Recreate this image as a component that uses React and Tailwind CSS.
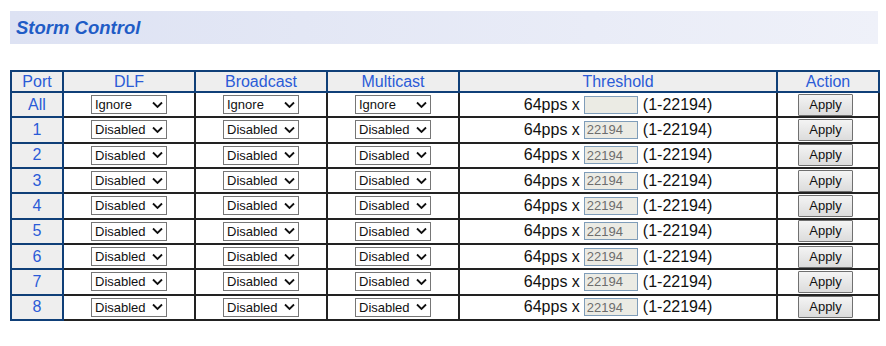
import React from "react";

const ports = ["1", "2", "3", "4", "5", "6", "7", "8"];

function Chevron() {
  return (
    <svg
      className="pointer-events-none absolute right-[4px] top-1/2 -translate-y-1/2"
      width="11"
      height="7"
      viewBox="0 0 11 7"
      fill="none"
    >
      <path d="M1 1l4.5 4.5L10 1" stroke="#111" strokeWidth="1.8" />
    </svg>
  );
}

function Select({ value, options }) {
  return (
    <div className="relative w-[76px] h-[19px]">
      <select
        defaultValue={value}
        className="appearance-none block w-full h-full border border-[#767676] bg-white pl-[3px] py-0 text-[13px] leading-[17px] text-[#111] rounded-none outline-none"
      >
        {options.map((o) => (
          <option key={o}>{o}</option>
        ))}
      </select>
      <Chevron />
    </div>
  );
}

function Threshold({ value }) {
  return (
    <div className="flex items-center justify-center text-[16px] leading-[18px] text-[#111]">
      <span>64pps x</span>
      <input
        disabled
        defaultValue={value}
        className="ml-[4px] w-[54px] h-[18px] border border-[#7f9db9] bg-[#ebebe4] px-[2px] text-[13px] leading-[16px] text-[#6d6d6d] outline-none"
      />
      <span className="ml-[5px]">(1-22194)</span>
    </div>
  );
}

function ApplyButton() {
  return (
    <button className="block w-[55px] h-[22px] border border-[#707070] rounded-[1px] bg-gradient-to-b from-[#f4f4f4] to-[#dcdcdc] text-[13px] leading-[20px] text-[#111]">
      Apply
    </button>
  );
}

const head = "border-2 border-[#0f3f78] bg-[#eeeeee] text-[#2a5bd7] font-normal text-[16px] h-[21px] p-0 leading-[18px]";
const portCell = "border-2 border-[#0f3f78] bg-[#eeeeee] text-[#2a5bd7] text-[16px] leading-[18px] h-[25.33px] p-0 text-center";
const cell = "border-2 border-[#222222] h-[25.33px] p-0 leading-none";

function Row({ port, mode, value }) {
  const opts = port === "All" ? ["Ignore", "Disabled", "Enabled"] : ["Disabled", "Enabled"];
  return (
    <tr>
      <td className={portCell}>{port}</td>
      {[0, 1, 2].map((i) => (
        <td key={i} className={cell}>
          <div className="flex justify-center">
            <Select value={mode} options={opts} />
          </div>
        </td>
      ))}
      <td className={cell}>
        <Threshold value={value} />
      </td>
      <td className={cell}>
        <div className="flex justify-center pr-[5px]">
          <ApplyButton />
        </div>
      </td>
    </tr>
  );
}

export default function App() {
  return (
    <div className="w-[886px] h-[346px] bg-white pt-[11px] pl-[10px] font-['Liberation_Sans',Arial,sans-serif]">
      <div className="w-[868px] h-[33px] bg-gradient-to-r from-[#dde2f3] to-[#eff1f9] flex items-center pl-[6px]">
        <h1 className="text-[18.5px] font-bold italic text-[#1f5cc6]">Storm Control</h1>
      </div>
      <table className="mt-[26px] w-[868px] table-fixed border-collapse">
        <colgroup>
          <col className="w-[52px]" />
          <col className="w-[132px]" />
          <col className="w-[132px]" />
          <col className="w-[132px]" />
          <col className="w-[318px]" />
          <col className="w-[102px]" />
        </colgroup>
        <thead>
          <tr>
            <th className={head}>Port</th>
            <th className={head}>DLF</th>
            <th className={head}>Broadcast</th>
            <th className={head}>Multicast</th>
            <th className={head}>Threshold</th>
            <th className={head}>Action</th>
          </tr>
        </thead>
        <tbody>
          <Row port="All" mode="Ignore" value="" />
          {ports.map((p) => (
            <Row key={p} port={p} mode="Disabled" value="22194" />
          ))}
        </tbody>
      </table>
    </div>
  );
}
